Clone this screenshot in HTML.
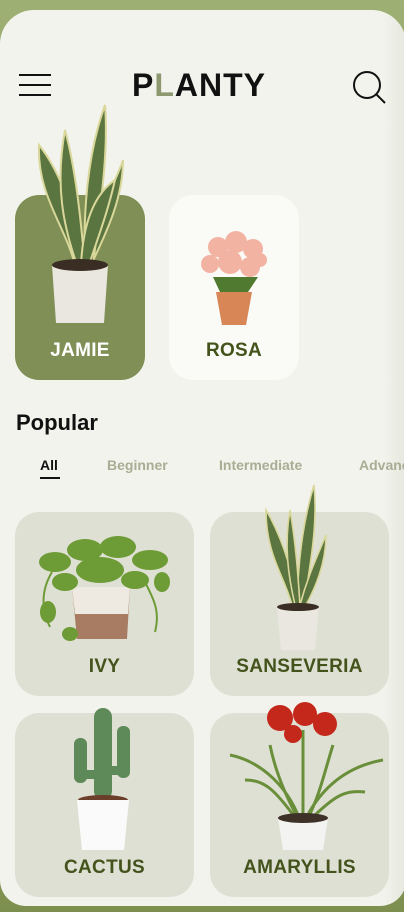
<!DOCTYPE html>
<html><head><meta charset="utf-8"><style>
*{margin:0;padding:0;box-sizing:border-box}
body{width:404px;height:912px;overflow:hidden;background:linear-gradient(#9daf73,#8a9c5c 90%,#7d8f4e);font-family:"Liberation Sans",sans-serif;position:relative}
.scr{position:absolute;left:0;top:10px;width:406px;height:896px;background:#f2f3ec;border-radius:34px 34px 26px 26px;overflow:hidden}
.shade{position:absolute;right:0;top:0;width:22px;height:100%;background:linear-gradient(90deg,rgba(242,243,236,0),rgba(230,231,222,1))}
.card{position:absolute;border-radius:24px;overflow:visible}
.lbl{position:absolute;left:0;right:0;text-align:center;font-weight:bold;font-size:19px;color:#44531c;letter-spacing:.3px}
svg{position:absolute;overflow:visible}
</style></head><body>
<div class="scr">
<div class="shade"></div>
<div style="position:absolute;left:19px;top:64px;width:32px;height:2px;background:#111"></div>
<div style="position:absolute;left:19px;top:74px;width:32px;height:2px;background:#111"></div>
<div style="position:absolute;left:19px;top:84px;width:32px;height:2px;background:#111"></div>
<div style="position:absolute;left:132px;top:57px;font-size:32px;font-weight:bold;letter-spacing:1px;color:#111">P<span style="color:#8d9870">L</span>ANTY</div>
<svg style="left:352px;top:60px" width="34" height="34"><circle cx="15" cy="15" r="13" fill="none" stroke="#111" stroke-width="2"/><line x1="24" y1="24" x2="33" y2="33" stroke="#111" stroke-width="2"/></svg>
<div class="card" style="left:15px;top:185px;width:130px;height:185px;background:#7f8f55"><div class="lbl" style="top:145px;color:#fff">JAMIE</div></div>
<div class="card" style="left:169px;top:185px;width:130px;height:185px;background:#fafaf6"><div class="lbl" style="top:145px">ROSA</div></div>
<svg style="left:35px;top:95px" width="90" height="212">
<g fill="#5a7540" stroke="#d9d79a" stroke-width="2"><path d="M40 160 C30 120 2 90 4 40 C20 60 40 100 48 160Z"/><path d="M48 160 C60 110 80 80 88 55 C88 95 70 130 56 160Z"/><path d="M42 160 C28 120 20 80 30 25 C42 70 46 120 50 160Z"/><path d="M50 160 C48 110 52 50 70 0 C74 50 64 110 58 160Z"/><path d="M46 160 C48 120 58 90 80 75 C72 110 62 135 54 160Z"/></g>
<path d="M17 160 L73 160 L69 218 L21 218Z" fill="#e9e7df"/><ellipse cx="45" cy="160" rx="28" ry="6" fill="#3a2e24"/></svg>
<svg style="left:198px;top:222px" width="72" height="95">
<g fill="#f3b3a3"><circle cx="20" cy="15" r="10"/><circle cx="38" cy="10" r="11"/><circle cx="55" cy="17" r="10"/><circle cx="12" cy="32" r="9"/><circle cx="32" cy="30" r="12"/><circle cx="52" cy="35" r="10"/><circle cx="62" cy="28" r="7"/></g>
<path d="M15 45 L60 45 L50 60 L22 60Z" fill="#4f7a30"/><path d="M18 60 L54 60 L48 93 L24 93Z" fill="#d88655"/></svg>
<div style="position:absolute;left:16px;top:400px;font-size:22px;font-weight:bold;color:#111">Popular</div>
<div style="position:absolute;left:40px;top:447px;font-size:14px;font-weight:bold;color:#111">All</div>
<div style="position:absolute;left:40px;top:467px;width:20px;height:1.5px;background:#111"></div>
<div style="position:absolute;left:107px;top:447px;font-size:14px;font-weight:bold;color:#a9ad94">Beginner</div>
<div style="position:absolute;left:219px;top:447px;font-size:14px;font-weight:bold;color:#a9ad94">Intermediate</div>
<div style="position:absolute;left:359px;top:447px;font-size:14px;font-weight:bold;color:#a9ad94;white-space:nowrap">Advanced</div>
<div class="card" style="left:15px;top:502px;width:179px;height:184px;background:#dfe0d4"><div class="lbl" style="top:144px">IVY</div></div>
<div class="card" style="left:210px;top:502px;width:179px;height:184px;background:#dfe0d4"><div class="lbl" style="top:144px">SANSEVERIA</div></div>
<div class="card" style="left:15px;top:703px;width:179px;height:184px;background:#dfe0d4"><div class="lbl" style="top:144px">CACTUS</div></div>
<div class="card" style="left:210px;top:703px;width:179px;height:184px;background:#dfe0d4"><div class="lbl" style="top:144px">AMARYLLIS</div></div>
<svg style="left:30px;top:522px" width="145" height="110">
<path d="M42 55 L100 55 L97 107 L47 107Z" fill="#a87c62"/><path d="M42 55 L100 55 L98 82 L45 82Z" fill="#eeeae2"/>
<g fill="#6d9b35"><ellipse cx="25" cy="30" rx="16" ry="10"/><ellipse cx="55" cy="18" rx="18" ry="11"/><ellipse cx="88" cy="15" rx="18" ry="11"/><ellipse cx="120" cy="28" rx="18" ry="10"/><ellipse cx="70" cy="38" rx="24" ry="13"/><ellipse cx="35" cy="50" rx="13" ry="9"/><ellipse cx="105" cy="48" rx="14" ry="9"/><ellipse cx="132" cy="50" rx="8" ry="10"/><ellipse cx="18" cy="80" rx="8" ry="11"/><ellipse cx="40" cy="102" rx="8" ry="7"/></g>
<path d="M22 40 C10 60 12 80 20 95 M115 50 C125 70 130 80 125 100" stroke="#6d9b35" stroke-width="2" fill="none"/></svg>
<svg style="left:262px;top:475px" width="70" height="160">
<g fill="#5a7540" stroke="#d9d79a" stroke-width="1.6"><path d="M30 120 C22 90 4 70 4 25 C16 45 30 80 36 120Z"/><path d="M35 120 C36 80 40 40 52 0 C56 40 48 80 42 120Z"/><path d="M38 120 C46 90 56 70 64 50 C64 80 52 105 44 120Z"/><path d="M33 120 C26 90 22 60 28 25 C34 60 36 90 38 120Z"/></g>
<path d="M15 122 L57 122 L53 165 L19 165Z" fill="#e9e7df"/><ellipse cx="36" cy="122" rx="21" ry="4" fill="#3a2e24"/></svg>
<svg style="left:70px;top:698px" width="66" height="145">
<g fill="#5e8a5a"><rect x="24" y="0" width="18" height="92" rx="9"/><rect x="4" y="30" width="13" height="45" rx="6"/><rect x="47" y="18" width="13" height="52" rx="6"/><rect x="10" y="62" width="20" height="9"/><rect x="38" y="58" width="14" height="9"/></g>
<ellipse cx="33" cy="92" rx="25" ry="5" fill="#6b3f2a"/><path d="M7 92 L59 92 L54 142 L12 142Z" fill="#fafafa"/></svg>
<svg style="left:225px;top:690px" width="160" height="150">
<g stroke="#6a8f3a" stroke-width="3" fill="none"><path d="M75 120 C60 80 30 60 5 55"/><path d="M80 120 C100 80 130 65 158 60"/><path d="M78 120 L78 30"/><path d="M72 120 C50 90 40 80 20 80"/><path d="M85 120 C110 95 120 90 140 92"/><path d="M74 120 C60 95 50 70 45 45"/><path d="M82 120 C95 95 100 70 108 45"/></g>
<g fill="#c4281b"><circle cx="55" cy="18" r="13"/><circle cx="80" cy="14" r="12"/><circle cx="100" cy="24" r="12"/><circle cx="68" cy="34" r="9"/></g>
<path d="M53 118 L103 118 L98 150 L58 150Z" fill="#f3f3f1"/><ellipse cx="78" cy="118" rx="25" ry="5" fill="#3d3128"/></svg>
</div>
</body></html>
